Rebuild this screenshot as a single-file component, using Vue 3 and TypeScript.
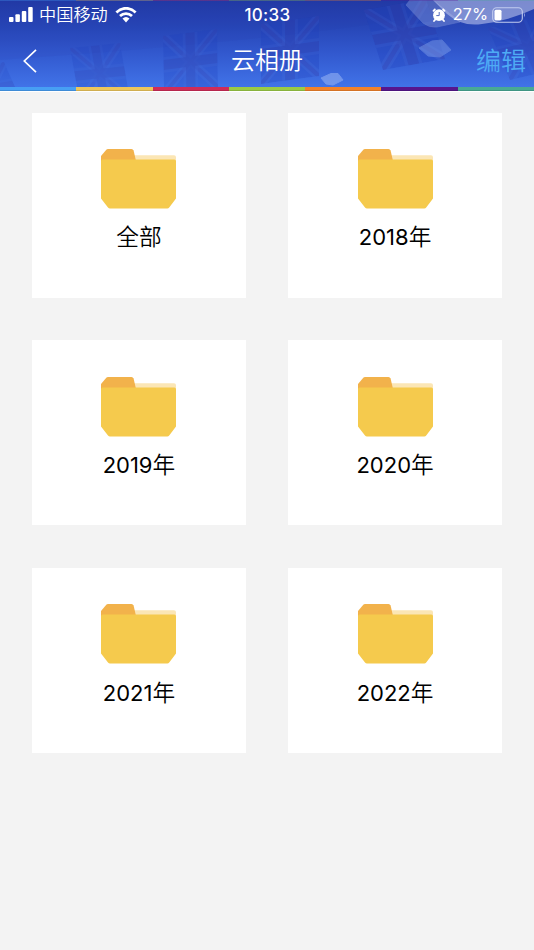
<script setup lang="ts">
interface Album {
  id: number
  digits: string
  label: string
}

interface Flag {
  transform: string
  opacity: number
}

const albums: Album[] = [
  { id: 1, digits: '', label: '全部' },
  { id: 2, digits: '2018', label: '年' },
  { id: 3, digits: '2019', label: '年' },
  { id: 4, digits: '2020', label: '年' },
  { id: 5, digits: '2021', label: '年' },
  { id: 6, digits: '2022', label: '年' },
]

const flags: Flag[] = [
  { transform: 'matrix(46 -8 20 45 -42 70)', opacity: 0.26 },
  { transform: 'matrix(50 -5 10 56 70 48)', opacity: 0.3 },
  { transform: 'matrix(54 -7 1 58 163 36)', opacity: 0.36 },
  { transform: 'matrix(58 -8 0 60 261 24)', opacity: 0.42 },
  { transform: 'matrix(62 -11 19 60 364 10)', opacity: 0.46 },
  { transform: 'matrix(60 -14 22 52 488 28)', opacity: 0.36 },
]
</script>

<template>
  <div class="screen">
    <header class="header">
      <svg class="scenery" viewBox="0 0 534 87" preserveAspectRatio="none" aria-hidden="true">
        <defs>
          <clipPath id="flag-edge"><path d="M0 0H1V1H0Z" /></clipPath>
          <g id="flag" clip-path="url(#flag-edge)">
            <path d="M0 0H1V1H0Z" fill="#2345bd" opacity=".7" />
            <path d="M0 0L1 1M1 0L0 1" stroke="#5a78da" stroke-width=".15" opacity=".32" />
            <path d="M0 0L1 1M1 0L0 1" stroke="#3438a3" stroke-width=".07" opacity=".6" />
            <path d="M.5 0V1M0 .5H1" stroke="#4c6bd0" stroke-width=".27" opacity=".32" />
            <path d="M.5 0V1M0 .5H1" stroke="#2b319e" stroke-width=".17" opacity=".6" />
          </g>
        </defs>
        <path d="M0 0H400V20Q260 42 0 60Z" fill="#2138a8" opacity=".08" />
        <use v-for="(flag, i) in flags" :key="i" href="#flag" :transform="flag.transform" :opacity="flag.opacity" />
        <path d="M410 0L406 5L423 23Q429 28 437 27L460 22L433 0Z" fill="#a6b7eb" stroke="#c3cff3" stroke-width=".7" opacity=".32" />
        <path d="M433 0L447 14Q462 27 482 24Q508 21 534 9V0Z" fill="#c6cef0" opacity=".55" />
        <path d="M419 48L432 41L442 40L451 50L440 57L428 56Z" fill="#8ba8ed" stroke="#8ba8ed" stroke-width="1" stroke-linejoin="round" opacity=".42" />
        <path d="M321 78L331 73.500L338 73.500L343 80L333 85L326 84Z" fill="#9ab6f4" stroke="#9ab6f4" stroke-width="1" stroke-linejoin="round" opacity=".55" />
        <g opacity=".3">
          <path d="M0 0H76V1H0Z" fill="#479ff4" />
          <path d="M76 0H153V1H76Z" fill="#edc65c" />
          <path d="M153 0H229V1H153Z" fill="#d02c58" />
          <path d="M229 0H305V1H229Z" fill="#9bcb45" />
          <path d="M305 0H381V1H305Z" fill="#f28229" />
          <path d="M381 0H458V1H381Z" fill="#57168e" />
          <path d="M458 0H534V1H458Z" fill="#48aa94" />
        </g>
      </svg>

      <div class="status">
        <div class="status-side">
          <svg class="signal" viewBox="0 0 24 15" fill="#fff">
            <rect x="0" y="10" width="4.5" height="5" rx="1" />
            <rect x="6.4" y="7.3" width="4.5" height="7.7" rx="1" />
            <rect x="12.8" y="4" width="4.5" height="11" rx="1" />
            <rect x="19.2" y="0" width="4.5" height="15" rx="1" />
          </svg>
          <span class="carrier">中国移动</span>
          <svg class="wifi" viewBox="0 0 22 16">
            <path d="M1.400 5.400C7-.1 15-.1 20.600 5.400M5 9C8.500 5.700 13.500 5.700 17 9" fill="none" stroke="#fff" stroke-width="2.8" />
            <path d="M7.500 11.600Q11 8.600 14.500 11.600L11 15.600Z" fill="#fff" />
          </svg>
        </div>
        <span class="clock">10:33</span>
        <div class="status-side status-right">
          <svg class="alarm" viewBox="0 0 14 14">
            <path d="M1.500 2.800L2.800 1.500M12.500 2.800L11.200 1.500M3 11.800L2 13M11 11.800L12 13" stroke="#fff" stroke-width="1.8" stroke-linecap="round" />
            <circle cx="7" cy="7.200" r="5.900" fill="#fff" />
            <path d="M7.200 4V7.600H4.300" fill="none" stroke="#5369bc" stroke-width="1" />
          </svg>
          <span class="percent">27%</span>
          <svg class="battery" viewBox="0 0 34 16">
            <rect x=".7" y=".7" width="29.6" height="14.6" rx="4" fill="none" stroke="#c1ccef" stroke-width="1.1" />
            <rect x="2.5" y="2.7" width="7" height="10.6" rx="1.5" fill="#fff" />
            <path d="M32 5.400Q33.800 8 32 10.600Z" fill="#aebcec" />
          </svg>
        </div>
      </div>

      <nav class="nav">
        <button class="back" aria-label="返回">
          <svg viewBox="0 0 14 24">
            <path d="M13 .8L1.300 12L13 23.200" fill="none" stroke="#fff" stroke-width="1.7" />
          </svg>
        </button>
        <h1 class="title">云相册</h1>
        <button class="edit">编辑</button>
      </nav>
    </header>

    <div class="stripe">
      <i class="blue"></i><i class="yellow"></i><i class="red"></i><i class="green"></i>
      <i class="orange"></i><i class="purple"></i><i class="teal"></i>
    </div>

    <main class="albums">
      <button v-for="album in albums" :key="album.id" class="album">
        <svg class="folder" viewBox="0 0 75 60">
          <path d="M30 6.200H73Q75 6.200 75 8.200V16H30Z" fill="#fbe6b5" />
          <path d="M0 14V7L5.300.8Q6 0 7 0H30.500Q32 0 32.600 1.600L35 12V16H0Z" fill="#f2b24b" />
          <path d="M0 12.200Q0 10.600 1.600 10.600H73.400Q75 10.600 75 12.200V49.500L68.200 58.600Q67.500 59.600 66.300 59.600H9Q7.800 59.600 7 58.600L0 49.500Z" fill="#f5ca4d" />
        </svg>
        <span class="name"><span v-if="album.digits" class="digits">{{ album.digits }}</span>{{ album.label }}</span>
      </button>
    </main>
  </div>
</template>

<style>
body {
  background: #f3f3f3;
}
</style>

<style scoped>
.screen {
  min-height: 950px;
  background: #f3f3f3;
  font-family: Inter, "Noto Sans CJK SC", sans-serif;
}

button {
  border: 0;
  padding: 0;
  background: none;
  font: inherit;
}

svg {
  display: block;
  flex: none;
}

.header {
  position: relative;
  height: 87px;
  overflow: hidden;
  background: linear-gradient(#2139a5 0%, #2746b7 30%, #3259cf 62%, #4173e8 100%);
  color: #fff;
}

.scenery {
  position: absolute;
  inset: 0;
  width: 100%;
  height: 100%;
}

.status,
.nav {
  position: relative;
  display: grid;
  grid-template-columns: 1fr auto 1fr;
  align-items: center;
}

.status {
  height: 29px;
  padding: 0 8px 0 9px;
}

.status-side {
  display: flex;
  align-items: center;
}

.status-right {
  justify-content: flex-end;
}

.signal {
  width: 24px;
  height: 15px;
}

.carrier {
  margin: 0 7px 0 6px;
  font-size: 17.2px;
  font-weight: 350;
  line-height: 29px;
}

.wifi {
  width: 22px;
  height: 16px;
}

.clock {
  font-size: 17px;
  font-weight: 550;
  letter-spacing: 0.3px;
}

.alarm {
  width: 14px;
  height: 14px;
}

.percent {
  margin: 0 4px 0 7px;
  font-size: 16.4px;
  line-height: 29px;
}

.battery {
  width: 34px;
  height: 16px;
}

.nav {
  box-sizing: border-box;
  height: 58px;
  padding: 6px 8px 0 23px;
  grid-template-columns: 1fr 72px 1fr;
}

.back {
  width: 14px;
}

.back svg {
  width: 14px;
  height: 24px;
}

.title {
  margin: 0 0 0 -7.5px;
  font-size: 24px;
  font-weight: 350;
  line-height: 36px;
  white-space: nowrap;
}

.edit {
  justify-self: end;
  color: #4eabf5;
  font-size: 25px;
  font-weight: 350;
  line-height: 36px;
}

.stripe {
  display: flex;
  height: 4px;
  border-bottom: 1px solid #fff;
}

.stripe i {
  flex: 1;
  box-shadow: inset 0 -1px rgb(0 0 0 / 12%);
}

.blue { background: #479ff4; }
.yellow { background: #edc65c; }
.red { background: #d02c58; }
.green { background: #9bcb45; }
.orange { background: #f28229; }
.purple { background: #57168e; }
.teal { background: #48aa94; }

.albums {
  display: grid;
  grid-template-columns: 1fr 1fr;
  gap: 42.7px;
  padding: 20.7px 32.2px;
}

.album {
  display: flex;
  flex-direction: column;
  align-items: center;
  height: 185px;
  padding-top: 36.3px;
  background: #fff;
  color: #000;
}

.folder {
  width: 75px;
  height: 60px;
}

.name {
  margin-top: 11.4px;
  font-size: 22.7px;
  font-weight: 350;
  line-height: 34px;
  white-space: nowrap;
}

.digits {
  font-size: 22px;
  font-weight: 370;
}
</style>
